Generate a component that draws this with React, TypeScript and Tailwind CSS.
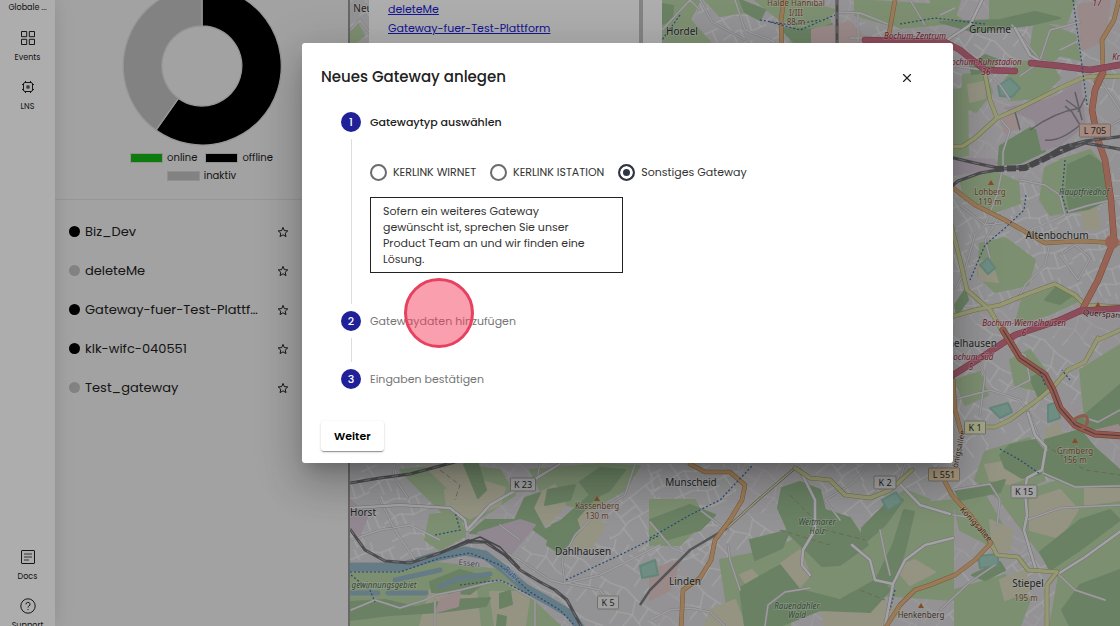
import { useState, type ReactNode } from "react";
import { X } from "lucide-react";

type Label = { x: number; y: number; text: string; size?: number; fill?: string; italic?: boolean; rotate?: number };

const TOWN_A = [
  "M350 0H369V50H350Z",
  "M700 0H770L830 25 900 20 940 50H690Z",
  "M940 190 1010 175 1070 190 1120 170V300L1060 290 940 320Z",
  "M350 465H440L470 500 480 545 430 562 350 560Z",
  "M650 464H740L730 530 700 560 650 590Z",
];
const TOWN_B = [
  "M950 40 1010 20 1080 30 1120 60V110L1010 100 950 90Z",
  "M950 320 1030 330 1120 350V400L1060 400 950 440Z",
  "M505 560 560 520 620 540 660 560V626H580Z",
  "M690 550 780 500 800 560 740 626H690Z",
];
const TOWN_C = [
  "M810 464H950V500L900 530 840 520Z",
  "M950 430 1040 420 1050 480 1000 500 950 490Z",
  "M960 570 1040 550 1100 530 1080 590 1010 626H940Z",
  "M600 464H660V560L610 540Z",
];

const GRASS = [
  "M350 30 358 24 364 36 356 42H350Z",
  "M953 90 967 88 968 155 953 158Z",
  "M963 75 985 72 992 92 976 112 962 106Z",
  "M1018 62 1048 60 1060 78 1040 98 1012 100 1005 80Z",
  "M960 180 995 172 1018 182 1020 203 995 212 965 200Z",
  "M980 244 1005 238 1035 260 1028 285 995 292 978 275Z",
  "M1022 300 1060 286 1080 300 1050 314 1015 325Z",
  "M1045 168 1066 158 1068 212 1050 215 1040 200Z",
  "M1060 160 1090 150 1103 165 1095 190 1068 180Z",
  "M662 0H700L690 20 710 42H662Z",
  "M705 0 740 0 745 12 720 16Z",
  "M755 0 800 0 835 10 820 28 780 20Z",
  "M795 22 830 20 832 43H790Z",
  "M855 0 940 5 965 22 900 28 855 15Z",
  "M990 0 1075 0 1066 25 1030 20 990 30Z",
  "M1035 20 1075 35 1080 60 1060 55 1045 68 1030 52Z",
  "M930 0 960 0 955 18 935 12Z",
  "M400 470 455 464 500 470 515 495 470 525 440 510Z",
  "M430 515 455 512 467 535 440 550 425 540Z",
  "M350 568 430 562 500 570 560 626H350Z",
  "M530 470 600 464 640 466 625 490 590 510 545 500Z",
  "M650 500 695 500 705 520 680 545 650 545Z",
  "M720 560 770 550 795 570 790 626H730Z",
  "M740 570 810 530 880 545 900 590 820 600 740 610Z",
  "M860 545 905 505 953 500V600L880 595Z",
  "M870 520 905 490 930 500 900 540Z",
  "M953 500 985 495 1005 530 990 545 960 530Z",
  "M1000 500 1060 480 1120 490V560L1060 580 1030 540Z",
  "M1060 570 1120 550V626H1050Z",
  "M1010 360 1030 350 1045 370 1035 390 1015 385Z",
  "M955 380 980 372 988 395 965 405Z",
  "M1080 370 1120 345V420L1085 420Z",
  "M985 452 1030 438 1045 480 1000 500 975 480Z",
  "M955 590 1005 575 1030 600 1020 626H955Z",
];
const FARM = [
  "M425 466 470 464 480 480 450 490Z",
  "M445 490 480 480 505 488 500 505 470 518 447 508Z",
  "M540 493 555 485 565 505 548 525 530 515Z",
  "M430 590 475 580 480 626H420Z",
  "M490 592 530 592 525 626H495Z",
  "M560 528 590 510 605 525 590 550 568 545Z",
  "M765 575 800 550 810 575 795 592 768 590Z",
  "M710 610 735 600 745 626H705Z",
  "M990 520 1012 530 1010 550 993 552Z",
  "M1030 500 1060 490 1078 510 1060 538 1030 530Z",
  "M1085 485 1120 480V500L1085 505Z",
  "M985 465 1015 460 1025 478 1010 484 990 480Z",
  "M1000 580 1025 570 1030 590 1005 600Z",
  "M977 262 990 260 998 282 980 280Z",
  "M1080 205 1098 210 1100 228 1085 230Z",
  "M1045 430 1058 422 1062 438 1048 440Z",
  "M895 568 915 560 935 572 910 585Z",
  "M820 605 880 600 905 612 880 626H825Z",
  "M968 85 984 82 985 98 970 102Z",
  "M740 575 752 570 770 590 758 600Z",
];
const FOREST = [
  "M1000 146 1030 128 1043 132 1045 151 1020 163 998 165Z",
  "M1068 165 1090 155 1102 164 1108 200 1088 209 1070 212 1066 190Z",
  "M1000 455 1010 445 1035 440 1045 452 1040 474 1022 478 1005 468Z",
  "M1045 440 1080 430 1095 448 1120 470V487L1075 487 1045 475Z",
  "M1070 420 1085 415 1120 385V425L1085 430Z",
  "M1040 552 1080 520 1110 510 1120 520 1080 550 1050 570Z",
  "M1062 610 1080 585 1120 570V626H1070Z",
  "M782 488 800 482 820 490 825 510 850 518 868 545 840 565 822 566 806 550 790 535 778 508Z",
  "M470 533 485 520 515 520 525 498 540 493 533 508 545 530 562 520 590 495 580 482 600 468 625 470 610 490 595 498 570 526 548 540 530 527 500 535Z",
  "M548 490 575 485 570 500 545 505Z",
  "M552 525 575 515 580 530 560 553 547 545Z",
  "M464 464H478L486 490 478 498Z",
  "M430 582 460 570 490 578 470 594 432 592Z",
  "M350 602 385 600 415 607 450 600 490 598 486 606 440 612 390 615 350 620Z",
  "M500 594 510 591 512 604 500 608Z",
  "M498 615 506 617 505 626H497Z",
  "M650 520 690 505 715 515 700 530 665 540Z",
  "M750 540 790 530 782 548 755 560Z",
  "M740 588 780 565 800 590 840 600 880 578 890 590 870 612 820 610 780 626H745Z",
  "M876 580 893 545 904 510 914 512 905 550 895 582Z",
  "M862 528 895 495 903 500 885 525 862 545Z",
  "M970 65 985 55 998 60 990 72 972 74Z",
  "M1030 378 1045 372 1050 390 1038 396Z",
  "M1095 410 1120 398V420L1098 422Z",
  "M1058 285 1073 295 1060 304 1045 300Z",
  "M955 305 965 290 968 300 957 315Z",
  "M955 490 985 485 1005 480 1000 492 960 500Z",
  "M972 575 1000 562 1005 570 985 580Z",
  "M740 0 765 10 760 20 745 12Z",
  "M780 28 820 30 832 24 830 43H795Z",
  "M662 4 673 6 672 20 662 24Z",
  "M940 22 1000 20 1035 12 1060 18 1030 25 975 32Z",
];
const PINK = [
  "M1000 118 1012 112 1018 128 1005 133Z",
  "M1030 105 1075 90 1085 100 1050 118Z",
  "M812 30 850 22 870 43H812Z",
  "M1078 5 1110 0 1105 40 1082 50Z",
  "M440 600 460 590 458 606 436 612Z",
  "M650 570 680 560 670 590 650 600Z",
  "M1098 430 1118 425 1120 430 1103 436Z",
];
const INDUSTRY = [
  "M1005 108 1050 100 1080 82 1085 125 1060 145 1042 150 1035 120Z",
  "M478 533 520 520 535 525 510 555 490 545Z",
  "M350 500 368 515 360 535 350 530Z",
  "M953 158 995 160 998 168 953 175Z",
];
const PITCH = [
  "M998 86 1010 78 1020 88 1012 97 1000 96Z",
  "M980 265 988 258 995 268 988 274Z",
  "M990 408 1008 403 1012 412 1000 418Z",
  "M1048 405 1058 402 1060 418 1048 422Z",
  "M978 556 998 554 998 566 980 568Z",
  "M640 566 655 560 658 575 642 578Z",
  "M882 500 896 492 902 502 888 510Z",
];

const LANES = [
  "M662 30 690 0 700 10M700 0 712 22 745 40M735 0 745 30 775 42M837 12 860 13 888 24 905 32M858 13V42M850 38H870",
  "M910 0 925 25M940 15 955 8M1012 25 1025 42 1040 60 1066 66M1040 60 1050 30 1080 22M1080 40 1060 50",
  "M953 66 985 70 1000 85 1010 100M1020 76 1040 62 1070 70M1100 80 1120 110M1003 166 997 195 985 225 975 235 965 270 955 290",
  "M1001 120 1010 130 1003 152 1003 168M1020 180 1045 185 1060 195 1065 215 1030 230M1050 243 1045 265 1025 285 1018 300",
  "M1120 120 1100 132M1066 212 1090 205 1120 198M1000 215 985 240 990 258M960 205 985 225 1010 222M1060 255 1075 245 1090 258 1078 280Z",
  "M970 345 985 375 980 415M953 400 990 390 1020 400 1030 415 1040 440 1047 450M1000 345 1025 355 1030 380 1010 390",
  "M1085 418 1098 422 1120 410M1043 473 1075 487 1120 486M1027 520 1060 508 1120 505",
  "M953 490 990 484 1000 500 997 525M1058 574 1075 590 1105 600M953 515 968 517M940 610 970 582 995 565",
  "M395 464 393 475 408 498M467 525 467 542M351 30 360 20 369 32",
  "M480 540 520 560 550 580 565 584 562 560 575 535 600 510 625 495 635 464M566 583 600 575 630 560 660 545M566 583 600 590 615 610",
  "M351 610 375 600 400 608 425 600 435 595 460 590 500 580 535 600 535 626M435 600 435 626",
  "M380 500 395 530 415 560M351 540 380 530 410 525 440 540M500 525 520 540M540 464 537 480",
  "M650 522 672 548 685 553M700 510 720 525 728 530",
  "M880 530 885 555 890 575M905 464 900 480M840 520 825 500 850 485 865 470",
  "M690 608 710 612 725 626M728 545 730 560 740 590M650 620 670 610 690 608M765 626 768 605 785 592 810 588",
];
const AVENUES = [
  "M983 -2 970 25 950 38 945 42M1015 28 1030 55 1045 64",
  "M1028 413 1035 435 1046 447 1042 470 1027 478 1025 490 1027 515 1024 530 1036 570",
  "M351 508 400 505 450 508 465 520 467 530 490 505 530 482 560 464",
  "M1058 574 1085 557 1125 528",
  "M800 470 815 500 815 530 803 550 802 565 810 575M852 545 870 560 875 580 893 584 890 600 885 626M893 584 905 560 925 545 953 538",
  "M898 482 920 505 950 514",
];
const PRIMARY = [
  "M784 0 781 20 782 50M895 0 888 40M1120 -4 1114 20 1102 40 1103 70 1096 82",
  "M953 188 975 205 1005 220 1045 243 1080 241 1120 243",
  "M690 464 705 472 730 472 745 485 742 500 730 520 715 540 711 560 700 578 683 590 681 630",
  "M953 380 955 410 961 432M943 478 952 495 970 515 985 535 991 543 975 560 955 575 930 585 915 590 900 605 884 630",
];
const SECONDARY = [
  "M940 148 963 146 975 138 997 118 1020 108 1060 88 1085 77 1125 76M985 74 990 100 997 118",
  "M940 320 975 310 1000 305 1030 293 1055 284 1075 295 1085 305 1125 307",
  "M950 220 960 260 967 290 990 310 1003 332 1014 350",
  "M1098 338 1085 362 1068 370 1055 385 1040 398 1010 420 995 427 975 427",
  "M991 543 997 555 1018 557 1028 570 1057 572 1047 585 1047 630",
  "M795 468 810 478 830 480 845 495 870 498 890 490 912 470",
  "M1098 340 1120 330",
];
const TRUNK = ["M1103 73 1095 90 1092 110 1098 140 1105 160 1111 200 1114 240 1108 255 1098 280 1083 308"];
const A43 = "M1003 330 1020 358 1045 375 1053 390 1060 408 1075 425 1095 434 1125 436";
const MOTORWAY = [
  "M865 40 945 42 960 50 975 62 985 70 1015 71M1031 63 1060 66 1090 70 1125 64",
  "M1125 308 1080 311 1060 320 1015 335 985 355 945 380",
];
const RAIL = [
  "M837 -2V50",
  "M945 156 975 163 1003 169 1025 166 1045 157 1060 148 1085 141 1125 136",
  "M945 192 958 181 980 173 1003 169 1025 168 1050 157 1085 143 1125 150",
  "M350 529 365 550 385 561 410 563 440 553 468 542 485 542 505 555 520 570 540 582 555 590 567 600 582 628",
  "M350 483 380 478 410 474 455 462",
];
const DOTTED = [
  "M680 15 662 40M760 20 790 25 820 20M770 22 800 30 835 15M900 24 935 18 985 24",
  "M1073 0 1080 50 1087 105M1065 160 1062 195 1068 215M1000 449 1020 460 1040 474",
  "M350 572 400 572 440 558 470 553 500 565 530 592 560 610 575 626M351 575 370 590 375 602",
  "M460 585 500 580 530 595M650 538 690 515 720 500 752 466M566 580 620 555 660 535M435 535 460 530 455 512",
  "M1026 195 1024 210 1005 228 985 245 970 280",
  "M1040 372 1045 385M1070 380 1062 370M895 590 890 610",
];

const ink = "#333333";
const brown = "#8f5a34";
const crimson = "#a8263f";
const green = "#4b6b48";
const LABELS: Label[] = [
  { x: 682, y: 35, text: "Hordel" },
  { x: 796, y: 6, text: "Halde Hannibal", size: 8, fill: brown },
  { x: 796, y: 16, text: "I/III", size: 8, fill: brown },
  { x: 796, y: 25, text: "88 m", size: 8, fill: brown },
  { x: 990, y: 33, text: "Grumme" },
  { x: 915, y: 39, text: "Bochum-Zentrum", size: 8, fill: crimson, italic: true },
  { x: 984, y: 65, text: "Bochum-Ruhrstadion", size: 8, fill: crimson, italic: true },
  { x: 986, y: 75, text: "36", size: 8, fill: crimson, italic: true },
  { x: 1116, y: 60, text: "Kr", size: 8, fill: crimson, italic: true },
  { x: 1097, y: 6, text: "17", size: 8, fill: crimson, italic: true },
  { x: 990, y: 195, text: "Lohberg", size: 8, fill: brown },
  { x: 990, y: 205, text: "119 m", size: 8, fill: brown },
  { x: 1084, y: 195, text: "Hauptfriedhof", size: 8, fill: green, italic: true },
  { x: 1057, y: 239, text: "Altenbochum" },
  { x: 1024, y: 326, text: "Bochum-Wiemelhausen", size: 8, fill: crimson, italic: true },
  { x: 1024, y: 336, text: "6", size: 8, fill: crimson, italic: true },
  { x: 962, y: 347, text: "Wiemelhausen" },
  { x: 971, y: 360, text: "Bochum-Süd", size: 8, fill: crimson, italic: true },
  { x: 971, y: 370, text: "5", size: 8, fill: crimson, italic: true },
  { x: 1106, y: 317, text: "Querspange", size: 8, fill: "#5c1526", rotate: 5 },
  { x: 1075, y: 454, text: "Grimberg", size: 8, fill: brown },
  { x: 1075, y: 463, text: "156 m", size: 8, fill: brown },
  { x: 974, y: 526, text: "Königsallee", size: 8, fill: "#5a3a10", rotate: 48 },
  { x: 961, y: 452, text: "Königsallee", size: 8, fill: "#5a3a10", rotate: -78 },
  { x: 1028, y: 587, text: "Stiepel" },
  { x: 1026, y: 601, text: "195 m", size: 8, fill: brown },
  { x: 921, y: 618, text: "Henkenberg", size: 8, fill: "#5b4a3c" },
  { x: 691, y: 486, text: "Munscheid" },
  { x: 685, y: 585, text: "Linden" },
  { x: 583, y: 555, text: "Dahlhausen" },
  { x: 363, y: 516, text: "Horst" },
  { x: 363, y: 12, text: "Neu" },
  { x: 597, y: 509, text: "Kassenberg", size: 8, fill: brown },
  { x: 597, y: 519, text: "130 m", size: 8, fill: brown },
  { x: 817, y: 525, text: "Weitmarer", size: 8, fill: green, italic: true },
  { x: 817, y: 534, text: "Holz", size: 8, fill: green, italic: true },
  { x: 797, y: 609, text: "Rauendahler", size: 8, fill: green, italic: true },
  { x: 797, y: 618, text: "Wald", size: 8, fill: green, italic: true },
  { x: 384, y: 588, text: "gewinnungsgebiet", size: 8, fill: green, italic: true },
  { x: 469, y: 566, text: "Essen", size: 8, fill: "#7a6a8a", rotate: 6 },
  { x: 510, y: 576, text: "Ruhr", size: 8, fill: "#4d7fc4", rotate: 42 },
];

const SHIELDS = [
  { x: 523, y: 484, text: "K 23", w: 25, fill: "#eeeeee" },
  { x: 608, y: 602, text: "K 5", w: 21, fill: "#eeeeee" },
  { x: 885, y: 482, text: "K 2", w: 22, fill: "#eeeeee" },
  { x: 1024, y: 491, text: "K 15", w: 26, fill: "#eeeeee" },
  { x: 975, y: 427, text: "K 1", w: 21, fill: "#f1f3c4" },
  { x: 944, y: 474, text: "L 551", w: 31, fill: "#f6dcb4" },
  { x: 1095, y: 130, text: "L 705", w: 31, fill: "#f6cabb" },
];

const PEAKS = [[991, 183], [1098, 305], [1075, 441], [597, 499], [921, 606]];

function Area({ shapes, fill, stroke }: { shapes: string[]; fill: string; stroke?: string }) {
  return <path d={shapes.join("")} fill={fill} stroke={stroke ?? fill} strokeWidth="2" strokeLinejoin="round" />;
}

function Road({ lines, color, casing, width }: { lines: string[]; color: string; casing: string; width: number }) {
  const d = lines.join("");
  return (
    <g fill="none" strokeLinecap="round" strokeLinejoin="round">
      <path d={d} stroke={casing} strokeWidth={width + 1} />
      <path d={d} stroke={color} strokeWidth={width} />
    </g>
  );
}

function CityMap() {
  return (
    <svg className="block h-full w-full" viewBox="350 0 770 626" preserveAspectRatio="xMinYMin slice" role="img" aria-label="Karte">
      <defs>
        <pattern id="streets-a" width="46" height="38" patternUnits="userSpaceOnUse" patternTransform="rotate(-24)">
          <path d="M0 8H20L32 14H46M0 27 18 24 30 30H46M8 0V8M8 8 12 25V38M26 0 24 11M32 14 30 30M40 14V30M20 24V38" fill="none" stroke="#f6f5f6" />
        </pattern>
        <pattern id="streets-b" width="52" height="44" patternUnits="userSpaceOnUse" patternTransform="rotate(34)">
          <path d="M0 10 16 6 34 10H52M0 30H22L36 24 52 30M12 7V30M22 30V44M30 9 36 24 34 44M46 10V28M0 20H12" fill="none" stroke="#f6f5f6" />
        </pattern>
        <pattern id="streets-c" width="40" height="48" patternUnits="userSpaceOnUse" patternTransform="rotate(-38)">
          <path d="M0 12H40M0 34 14 30 40 34M10 12V31M22 0 20 12M30 12V33M6 32V48M26 32 24 48M10 22H30" fill="none" stroke="#f6f5f6" />
        </pattern>
      </defs>
      <rect x="350" width="770" height="626" fill="#dad8db" />
      <rect x="350" width="770" height="626" fill="url(#streets-b)" opacity="0.5" />
      <Area shapes={TOWN_A} fill="#d9d8db" />
      <Area shapes={TOWN_B} fill="#d9d8db" />
      <Area shapes={TOWN_C} fill="#d9d8db" />
      <path d={TOWN_A.join("")} fill="url(#streets-a)" />
      <path d={TOWN_B.join("")} fill="url(#streets-b)" />
      <path d={TOWN_C.join("")} fill="url(#streets-c)" />
      <Area shapes={GRASS} fill="#b8d3a7" />
      <Area shapes={FARM} fill="#dcdac2" />
      <Area shapes={FOREST} fill="#9cbf93" />
      <Area shapes={PINK} fill="#e3caca" />
      <Area shapes={INDUSTRY} fill="#d5c7d5" />
      <Area shapes={PITCH} fill="#a3d0c1" stroke="#94c4b4" />
      <g fill="none" stroke="#95b6c6" strokeLinecap="round" strokeLinejoin="round">
        <path d="M345 567 400 567 430 558 465 551 485 555 505 570 525 588 550 602 570 614 582 630" strokeWidth="9" />
        <path d="M351 593 378 593M388 593 426 593M440 586 460 578 490 574M395 580 440 570" strokeWidth="5" />
      </g>
      <g fill="none" stroke="#9a8f80" strokeWidth="0.8" strokeDasharray="5 3">
        <path d="M440 470 460 485 455 500M790 495 825 530 865 540M1045 445 1085 470 1120 475M780 530 830 545M860 590 885 600" />
      </g>
      <g fill="none" stroke="#8c8c90" strokeWidth="1.5">
        <path d="M1045 140Q1060 142 1080 125L1072 112 1065 106M1030 130Q1055 112 1080 108M1015 112 1020 130M1075 92 1082 120M1066 100 1080 110M1085 98 1078 112" />
      </g>
      <Road lines={LANES} color="#e8e6e9" casing="#bbb9bc" width={1.4} />
      <Road lines={AVENUES} color="#efedf0" casing="#aaa8ab" width={2.6} />
      <path d="M795 468 760 498 727 528 690 550 650 590 640 605" fill="none" stroke="#7d7d80" strokeWidth="2.5" />
      <path d="M795 468 760 498 727 528" fill="none" stroke="#e7e9ad" strokeWidth="1.5" />
      <Road lines={SECONDARY} color="#dee0aa" casing="#a1a66b" width={3.6} />
      <Road lines={PRIMARY} color="#e3b684" casing="#b58450" width={3.6} />
      <Road lines={TRUNK} color="#dd937d" casing="#b76a52" width={5.5} />
      <circle cx="1112" cy="242" r="7" fill="#dd937d" />
      <Road lines={MOTORWAY} color="#cf7186" casing="#b85069" width={5.5} />
      <Road lines={[A43]} color="#d88472" casing="#a85848" width={6} />
      <path d={A43} fill="none" stroke="#7d5563" strokeWidth="1.2" />
      <path d="M1072 421Q1084 412 1087 418T1080 430" fill="none" stroke="#d88472" strokeWidth="3" />
      <g fill="none" strokeLinejoin="round">
        <path d={RAIL.join("")} stroke="#707073" strokeWidth="3" />
        <path d={RAIL.join("")} stroke="#a9a9ac" strokeWidth="1" strokeDasharray="7 7" />
        <path d="M995 169 1025 168 1050 156 1070 146" stroke="#69696c" strokeWidth="6" strokeDasharray="9 3" />
        <path d="M440 553 468 540 488 542 508 558M450 548 480 537 500 547 520 568" stroke="#69696c" strokeWidth="1.5" />
      </g>
      <path d={DOTTED.join("")} fill="none" stroke="#3f6ba6" strokeWidth="1.2" strokeDasharray="2 2" />
      {PEAKS.map(([x, y]) => (
        <path key={x} d={`M${x} ${y - 3}l3 5h-6z`} fill="#c96f3b" />
      ))}
      <g fontFamily="'Noto Sans', sans-serif" textAnchor="middle">
        {LABELS.map((l) => (
          <text
            key={`${l.text}-${l.y}`}
            x={l.x}
            y={l.y}
            fontSize={l.size ?? 10}
            fill={l.fill ?? ink}
            fontStyle={l.italic ? "italic" : "normal"}
            transform={l.rotate ? `rotate(${l.rotate} ${l.x} ${l.y})` : undefined}
            stroke="#ffffff"
            strokeOpacity="0.4"
            strokeWidth="1.5"
            paintOrder="stroke"
          >
            {l.text}
          </text>
        ))}
        {SHIELDS.map((s) => (
          <g key={s.text}>
            <rect x={s.x - s.w / 2} y={s.y - 6} width={s.w} height="13" rx="1" fill={s.fill} stroke="#aaa59c" />
            <text x={s.x} y={s.y + 4} fontSize="9" fill={ink}>
              {s.text}
            </text>
          </g>
        ))}
      </g>
    </svg>
  );
}

function NavItem({ icon, label }: { icon: ReactNode; label: string }) {
  return (
    <a href="#" className="flex h-[49px] flex-col items-center gap-1.5 text-[8px] leading-3">
      <span className="flex h-4 items-center">{icon}</span>
      {label}
    </a>
  );
}

function LineIcon({ size, children }: { size: number; children: ReactNode }) {
  return (
    <svg width={size} height={size} viewBox={`0 0 ${size} ${size}`} fill="none" stroke="currentColor" strokeWidth="1">
      {children}
    </svg>
  );
}

function Sidebar() {
  return (
    <nav className="relative z-10 flex w-[55px] shrink-0 flex-col overflow-hidden bg-white shadow-[0_0_20px_rgba(0,0,0,0.12)]">
      <a href="#" className="mt-0.5 mb-4 text-center text-[8px] leading-3">Globale ...</a>
      <NavItem
        label="Events"
        icon={
          <LineIcon size={14}>
            <path d="M.5.5h5.200v5.200H.5zM8.300.5h5.200v5.200H8.300zM.5 8.300h5.200v5.200H.5zM8.300 8.300h5.200v5.200H8.300z" />
          </LineIcon>
        }
      />
      <NavItem
        label="LNS"
        icon={
          <LineIcon size={14}>
            <rect x="2.500" y="2.500" width="9" height="9" rx="1.500" />
            <rect x="6" y="6" width="2" height="2" />
            <path d="M4.500 1v1.500M9.500 1v1.500M4.500 11.500V13M9.500 11.500V13M1 4.500h1.500M1 9.500h1.500M11.500 4.500H13M11.500 9.500H13" />
          </LineIcon>
        }
      />
      <div className="mt-auto -mb-[21px]">
        <NavItem
          label="Docs"
          icon={
            <LineIcon size={14}>
              <rect x="0.5" y="0.5" width="13" height="13" rx="0.5" />
              <path d="M3 4H11M3 7H11M3 10H8" strokeWidth="0.8" />
            </LineIcon>
          }
        />
        <NavItem
          label="Support"
          icon={
            <LineIcon size={16}>
              <circle cx="8" cy="8" r="7.200" />
              <path d="M6 6.300a2 2 0 1 1 2.900 1.800c-.6.3-.9.7-.9 1.500M8 11v1" />
            </LineIcon>
          }
        />
      </div>
    </nav>
  );
}

const GATEWAYS = [
  { name: "Biz_Dev", active: true },
  { name: "deleteMe", active: false },
  { name: "Gateway-fuer-Test-Plattform", active: true },
  { name: "klk-wifc-040551", active: true },
  { name: "Test_gateway", active: false },
];

function LegendItem({ swatch, label }: { swatch: string; label: string }) {
  return (
    <span className="flex items-center gap-1">
      <span className={`h-2.5 w-[33px] border border-[#d4d4d4] ${swatch}`} />
      {label}
    </span>
  );
}

function GatewayPanel() {
  return (
    <aside className="flex w-[293px] shrink-0 flex-col bg-[#efefef]">
      <svg className="h-[146px] w-full" viewBox="55 0 293 146" role="img" aria-label="Gateway-Status">
        <g stroke="#dcdcdc" strokeWidth="1.300">
          <path d="M202-13A79 79 0 1 1 156 130L178.400 98.400A40 40 0 1 0 202 26Z" fill="#000" />
          <path d="M202-13A79 79 0 0 0 156 130L178.400 98.400A40 40 0 0 1 202 26Z" fill="#c0c0c0" />
        </g>
      </svg>
      <div className="flex h-[54px] flex-col items-center gap-0.5 border-b border-[#dddddd] pt-1 text-[10px] leading-4">
        <div className="flex gap-2">
          <LegendItem swatch="bg-[#16b516]" label="online" />
          <LegendItem swatch="bg-black" label="offline" />
        </div>
        <LegendItem swatch="bg-[#c0c0c0]" label="inaktiv" />
      </div>
      <ul className="pt-3">
        {GATEWAYS.map((g) => (
          <li key={g.name} className="flex h-[39px] items-center pl-3.5">
            <span className={g.active ? "size-[11px] shrink-0 rounded-full bg-black" : "size-[11px] shrink-0 rounded-full bg-[#c0c0c0]"} />
            <span className="ml-[5px] w-44 truncate text-[13px] leading-5">{g.name}</span>
            <button type="button" aria-label={`${g.name} als Favorit markieren`} className="ml-4 shrink-0">
              <svg width="12" height="12" viewBox="0 0 12 12" fill="none" stroke="currentColor" strokeWidth="1">
                <path d="M6 1.400 7.300 4.600 10.800 4.900 8.200 7.200 9 10.600 6 8.800 3 10.600 3.800 7.200 1.200 4.900 4.700 4.600Z" />
              </svg>
            </button>
          </li>
        ))}
      </ul>
    </aside>
  );
}

function MapPopup() {
  return (
    <div className="absolute top-0 left-[19px] flex h-24 w-[293px] overflow-hidden bg-white">
      <div className="flex flex-1 flex-col items-start border-r-4 border-[#c1c1c1] pl-[19px] text-[11px] leading-[19px] text-[#2020d8]">
        <a href="#" className="underline">deleteMe</a>
        <a href="#" className="underline">Gateway-fuer-Test-Plattform</a>
        <a href="#" className="underline">klk-wifc-040551</a>
      </div>
      <div className="w-[19px]" />
    </div>
  );
}

function StepNumber({ value }: { value: number }) {
  return (
    <span className="flex size-5 shrink-0 items-center justify-center rounded-full bg-[#202198] text-[11px] font-medium text-white">
      {value}
    </span>
  );
}

const TYPES = ["KERLINK WIRNET", "KERLINK ISTATION", "Sonstiges Gateway"];

function GatewayDialog() {
  const [type, setType] = useState(TYPES[2]);
  return (
    <div
      role="dialog"
      aria-modal="true"
      aria-labelledby="dialog-title"
      className="relative w-full rounded-[3px] bg-white px-[19px] pb-3 shadow-[0_11px_15px_-7px_rgba(0,0,0,0.2),0_24px_38px_3px_rgba(0,0,0,0.14),0_9px_46px_8px_rgba(0,0,0,0.12)]"
    >
      <header className="flex h-[69px] items-center justify-between pr-[19px]">
        <h2 id="dialog-title" className="text-[15px] font-medium">Neues Gateway anlegen</h2>
        <button type="button" aria-label="Schließen" className="flex size-4 items-center justify-center rounded">
          <X size={14} strokeWidth={2} />
        </button>
      </header>
      <ol className="pl-5 text-[11px]">
        <li>
          <div className="flex h-5 items-center gap-[9px] font-medium">
            <StepNumber value={1} />
            Gatewaytyp auswählen
          </div>
          <div className="flex h-[179px] gap-[9px]">
            <div className="flex w-5 shrink-0 justify-center py-[7px]">
              <div className="w-px bg-[#dddddd]" />
            </div>
            <div className="pt-8">
              <div role="radiogroup" aria-label="Gatewaytyp" className="flex gap-3.5">
                {TYPES.map((t) => (
                  <label key={t} className="flex items-center gap-1.5 leading-[17px] text-[#333333]">
                    <input
                      type="radio"
                      name="gateway-type"
                      checked={t === type}
                      onChange={() => setType(t)}
                      className="size-[17px] appearance-none rounded-full border-2 border-[#6b6b6b] bg-white checked:border-[#2f3442] checked:bg-[#2f3442] checked:shadow-[inset_0_0_0_3px_white]"
                    />
                    {t}
                  </label>
                ))}
              </div>
              <p className="mt-4 w-[253px] border border-[#222222] py-[5px] pr-6 pl-3 leading-4 text-[#333333]">
                Sofern ein weiteres Gateway gewünscht ist, sprechen Sie unser Product Team an und wir finden eine Lösung.
              </p>
            </div>
          </div>
        </li>
        <li>
          <div className="flex h-5 items-center gap-[9px] text-[#757575]">
            <StepNumber value={2} />
            Gatewaydaten hinzufügen
          </div>
          <div className="flex h-[38px] w-5 justify-center py-[7px]">
            <div className="w-px bg-[#dddddd]" />
          </div>
        </li>
        <li className="flex h-5 items-center gap-[9px] text-[#757575]">
          <StepNumber value={3} />
          Eingaben bestätigen
        </li>
      </ol>
      <button
        type="button"
        className="mt-8 h-[30px] rounded-[3px] bg-white px-[13px] text-[11px] font-semibold text-black shadow-[0_2px_1px_-1px_rgba(0,0,0,0.25),0_1px_1px_rgba(0,0,0,0.14),0_1px_3px_rgba(0,0,0,0.16)]"
      >
        Weiter
      </button>
      <span className="pointer-events-none absolute top-[235px] left-[102px] size-[70px] rounded-full border-[3px] border-[#e8405f] bg-[#f43f5e]/50" />
    </div>
  );
}

export default function App() {
  return (
    <div className="relative h-screen overflow-hidden text-[#212121] [font-family:Poppins,Inter,sans-serif]">
      <div className="flex h-full">
        <Sidebar />
        <GatewayPanel />
        <main className="relative min-w-0 flex-1 border-l-2 border-[#999999]">
          <CityMap />
          <MapPopup />
        </main>
      </div>
      <div className="absolute inset-0 z-20 flex items-start bg-black/32 pt-[43px] pr-[167px] pl-[302px]">
        <GatewayDialog />
      </div>
    </div>
  );
}
